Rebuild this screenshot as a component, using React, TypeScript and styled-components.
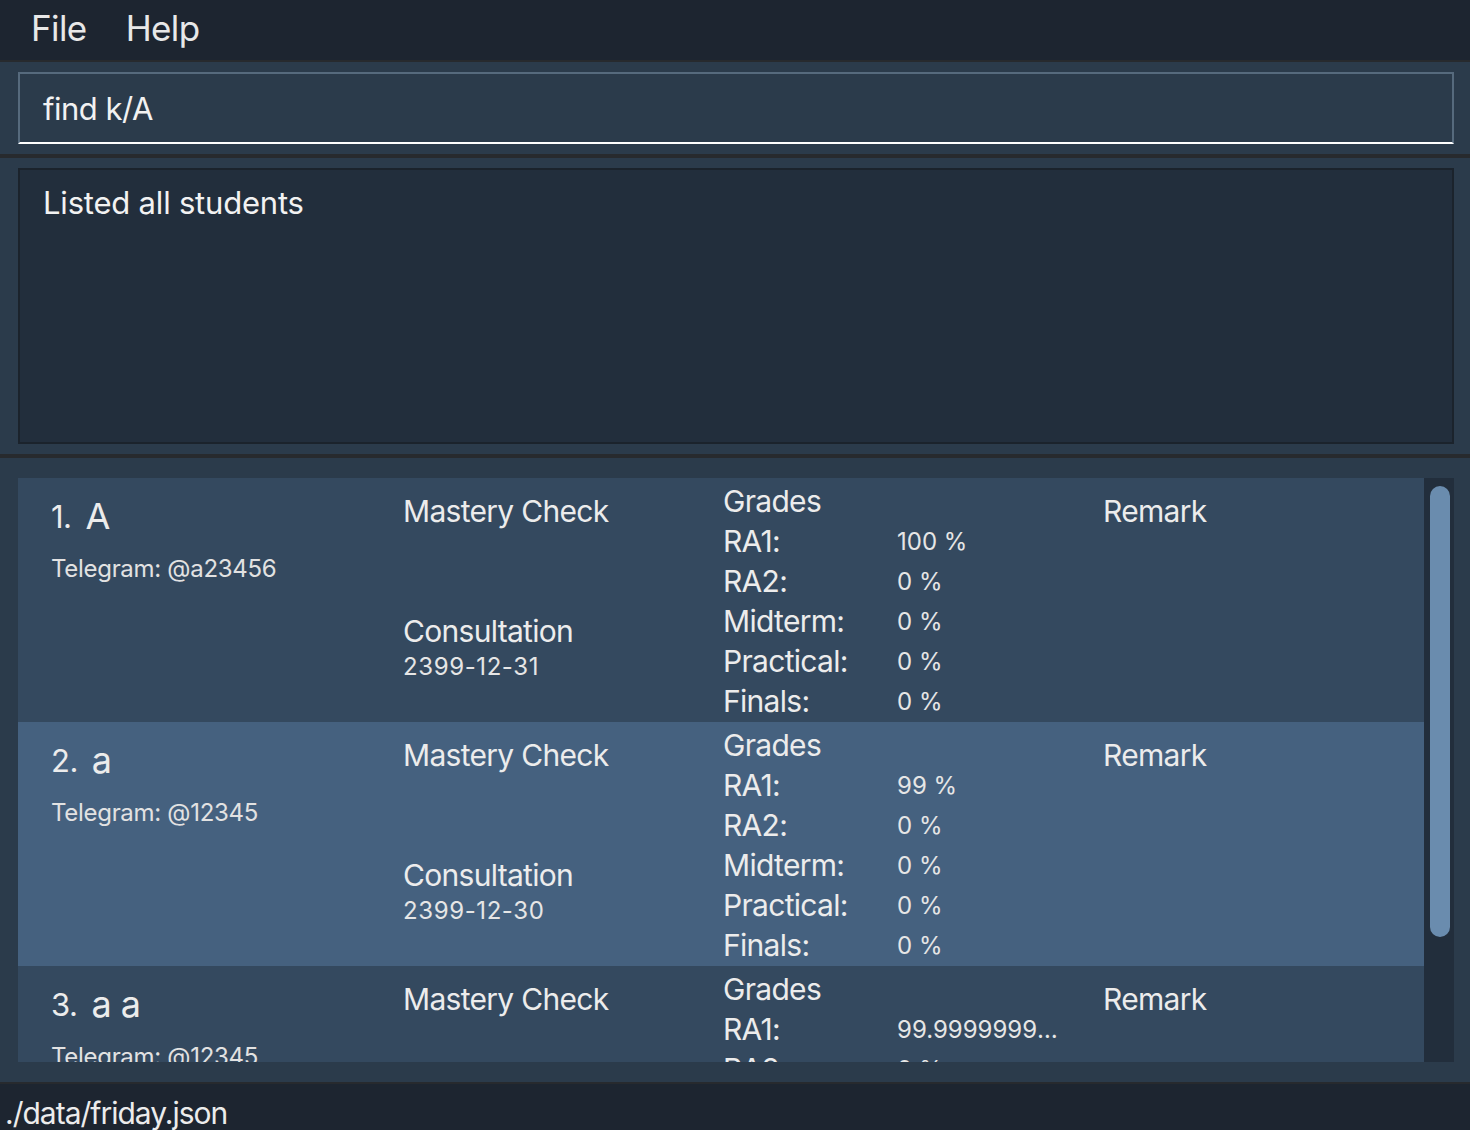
import React from "react";
import styled, { createGlobalStyle } from "styled-components";

const GlobalStyle = createGlobalStyle`
  html, body { margin: 0; padding: 0; background: #1d2530; }
  body { font-family: Inter, "Noto Sans", "Liberation Sans", sans-serif; color: #ececec; }
  * { box-sizing: border-box; }
`;

const Page = styled.div`
  width: 1470px;
  height: 1130px;
  display: flex;
  flex-direction: column;
  background: #1d2530;
  overflow: hidden;
`;

const MenuBar = styled.div`
  height: 60px;
  display: flex;
  align-items: center;
  gap: 39px;
  padding-left: 31px;
  padding-bottom: 4px;
  background: #1d2530;
`;

const MenuItem = styled.span`
  font-size: 35px;
  color: #e8e8e8;
  letter-spacing: -0.6px;
`;

const Separator = styled.div<{ $h: number }>`
  height: ${(p) => p.$h}px;
  background: #272a2e;
  flex-shrink: 0;
`;

const Section = styled.div<{ $pt: number; $pb: number }>`
  background: #2b3b4b;
  padding: ${(p) => p.$pt}px 16px ${(p) => p.$pb}px 18px;
  flex-shrink: 0;
`;

const CommandField = styled.div`
  height: 72px;
  border: 2px solid #566a7d;
  border-bottom: 2px solid #ffffff;
  background: #2b3b4b;
  display: flex;
  align-items: center;
  padding-left: 23px;
  font-size: 31px;
  letter-spacing: -0.5px;
  color: #f2f2f2;
`;

const ResultBox = styled.div`
  height: 276px;
  border: 2px solid #1b232c;
  background: #222e3c;
  padding: 13px 23px;
  font-size: 31px;
  letter-spacing: -0.2px;
  color: #f2f2f2;
  line-height: 40px;
`;

const ListSection = styled.div`
  background: #2b3b4b;
  padding: 20px 16px 20px 18px;
  height: 624px;
  flex-shrink: 0;
  display: flex;
`;

const ListViewport = styled.div`
  flex: 1;
  height: 584px;
  overflow: hidden;
  display: flex;
  flex-direction: column;
`;

const Track = styled.div`
  width: 30px;
  height: 584px;
  background: #222e3c;
  padding: 8px 4px 0 6px;
  flex-shrink: 0;
`;

const Thumb = styled.div`
  width: 20px;
  height: 451px;
  border-radius: 10px;
  background: #6a8cae;
`;

const Card = styled.div<{ $alt: boolean }>`
  height: 244px;
  flex-shrink: 0;
  background: ${(p) => (p.$alt ? "#45617f" : "#34495f")};
  display: grid;
  grid-template-columns: 352px 320px 380px 1fr;
  padding-left: 33px;
`;

const NameCol = styled.div`
  padding-top: 16px;
  display: flex;
  flex-direction: column;
`;

const NameLine = styled.div`
  height: 44px;
  display: flex;
  align-items: center;
  gap: 14px;
  margin-bottom: 16px;
`;

const Index = styled.span`
  font-size: 31px;
  letter-spacing: -0.5px;
`;

const Name = styled.span`
  font-size: 36px;
  letter-spacing: -0.5px;
`;

const Telegram = styled.div`
  font-size: 24px;
  line-height: 30px;
  color: #e2e2e2;
  letter-spacing: -0.3px;
`;

const Col = styled.div<{ $pt: number }>`
  padding-top: ${(p) => p.$pt}px;
  display: flex;
  flex-direction: column;
`;

const Heading = styled.div<{ $gapAfter?: number }>`
  font-size: 30px;
  line-height: 40px;
  letter-spacing: -0.7px;
  margin-bottom: ${(p) => p.$gapAfter ?? 0}px;
  white-space: nowrap;
`;

const SubText = styled.div`
  font-size: 24px;
  line-height: 32px;
  letter-spacing: 0.6px;
  color: #e6e6e6;
`;

const GradeRow = styled.div`
  display: grid;
  grid-template-columns: 174px 1fr;
  align-items: center;
  height: 40px;
`;

const GradeLabel = styled.span`
  font-size: 30px;
  letter-spacing: -0.7px;
`;

const GradeValue = styled.span`
  font-size: 24px;
  letter-spacing: 0px;
  color: #e6e6e6;
  white-space: nowrap;
  overflow: hidden;
  text-overflow: ellipsis;
  max-width: 172px;
`;

const StatusBar = styled.div`
  height: 46px;
  background: #1d2530;
  padding: 9px 0 0 5px;
  font-size: 30px;
  letter-spacing: -1px;
  line-height: 40px;
  color: #ececec;
  flex-shrink: 0;
  overflow: hidden;
  white-space: nowrap;
`;

type Student = {
  name: string;
  telegram: string;
  consultation: string;
  grades: [string, string][];
};

const students: Student[] = [
  {
    name: "A",
    telegram: "@a23456",
    consultation: "2399-12-31",
    grades: [
      ["RA1:", "100 %"],
      ["RA2:", "0 %"],
      ["Midterm:", "0 %"],
      ["Practical:", "0 %"],
      ["Finals:", "0 %"],
    ],
  },
  {
    name: "a",
    telegram: "@12345",
    consultation: "2399-12-30",
    grades: [
      ["RA1:", "99 %"],
      ["RA2:", "0 %"],
      ["Midterm:", "0 %"],
      ["Practical:", "0 %"],
      ["Finals:", "0 %"],
    ],
  },
  {
    name: "a a",
    telegram: "@12345",
    consultation: "2399-12-29",
    grades: [
      ["RA1:", "99.99999999999 %"],
      ["RA2:", "0 %"],
      ["Midterm:", "0 %"],
      ["Practical:", "0 %"],
      ["Finals:", "0 %"],
    ],
  },
];

export default function App() {
  return (
    <>
      <GlobalStyle />
      <Page>
        <MenuBar>
          <MenuItem>File</MenuItem>
          <MenuItem>Help</MenuItem>
        </MenuBar>
        <Separator $h={2} />
        <Section $pt={10} $pb={10}>
          <CommandField>find k/A</CommandField>
        </Section>
        <Separator $h={4} />
        <Section $pt={10} $pb={10}>
          <ResultBox>Listed all students</ResultBox>
        </Section>
        <Separator $h={4} />
        <ListSection>
          <ListViewport>
            {students.map((s, i) => (
              <Card key={i} $alt={i % 2 === 1}>
                <NameCol>
                  <NameLine>
                    <Index>{i + 1}.</Index>
                    <Name>{s.name}</Name>
                  </NameLine>
                  <Telegram>Telegram: {s.telegram}</Telegram>
                </NameCol>
                <Col $pt={13}>
                  <Heading $gapAfter={80}>Mastery Check</Heading>
                  <Heading>Consultation</Heading>
                  <SubText>{s.consultation}</SubText>
                </Col>
                <Col $pt={3}>
                  <Heading>Grades</Heading>
                  {s.grades.map(([l, v]) => (
                    <GradeRow key={l}>
                      <GradeLabel>{l}</GradeLabel>
                      <GradeValue>{v}</GradeValue>
                    </GradeRow>
                  ))}
                </Col>
                <Col $pt={13}>
                  <Heading>Remark</Heading>
                </Col>
              </Card>
            ))}
          </ListViewport>
          <Track>
            <Thumb />
          </Track>
        </ListSection>
        <Separator $h={2} />
        <StatusBar>./data/friday.json</StatusBar>
      </Page>
    </>
  );
}
